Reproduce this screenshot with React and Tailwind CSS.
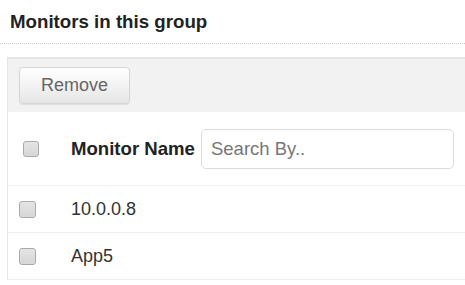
import React from 'react';

const Check = ({ className = '' }) => (
  <span
    className={`block w-[16px] h-[16px] rounded-[3px] border border-[#a9a9a9] bg-gradient-to-b from-[#e4e4e4] to-[#d6d6d6] shadow-[inset_0_0_1px_rgba(255,255,255,0.8)] ${className}`}
  />
);

const rows = ['10.0.0.8', 'App5'];

export default function App() {
  return (
    <div className="w-[465px] h-[285px] overflow-hidden bg-white font-['Liberation_Sans',Arial,sans-serif] text-[#333]">
      <div className="h-[44px] flex items-center pl-[10px] border-b border-dotted border-[#c8c8c8]">
        <h2 className="text-[18.7px] font-bold text-[#222] leading-none pt-[1px]">Monitors in this group</h2>
      </div>

      <div className="mt-[13px] ml-[7px] w-[470px] border-l border-[#e6e6e6]">
        <div className="h-[55px] bg-[#f2f2f2] border-t-2 border-[#e6e6e6] flex items-center pl-[11px]">
          <button className="w-[111px] h-[37px] rounded-[4px] border border-[#d6d6d6] bg-gradient-to-b from-white to-[#e6e6e6] text-[18px] text-[#666] shadow-[0_1px_1px_rgba(0,0,0,0.08)]">
            Remove
          </button>
        </div>

        <div className="h-[74px] flex items-center border-b border-[#efefef]">
          <div className="w-[63px] pl-[15px]">
            <Check />
          </div>
          <span className="text-[18.6px] font-bold text-[#222] whitespace-nowrap">Monitor Name</span>
          <input
            readOnly
            placeholder="Search By.."
            className="ml-[6px] w-[253px] h-[40px] rounded-[5px] border border-[#dddddd] px-[9px] text-[18.5px] placeholder-[#777] outline-none"
          />
        </div>

        {rows.map(name => (
          <div key={name} className="h-[47px] flex items-center border-b border-[#efefef]">
            <div className="w-[63px] pl-[11px]">
              <Check className="w-[17px] h-[17px]" />
            </div>
            <span className="text-[18px] text-[#333]">{name}</span>
          </div>
        ))}
      </div>
    </div>
  );
}
